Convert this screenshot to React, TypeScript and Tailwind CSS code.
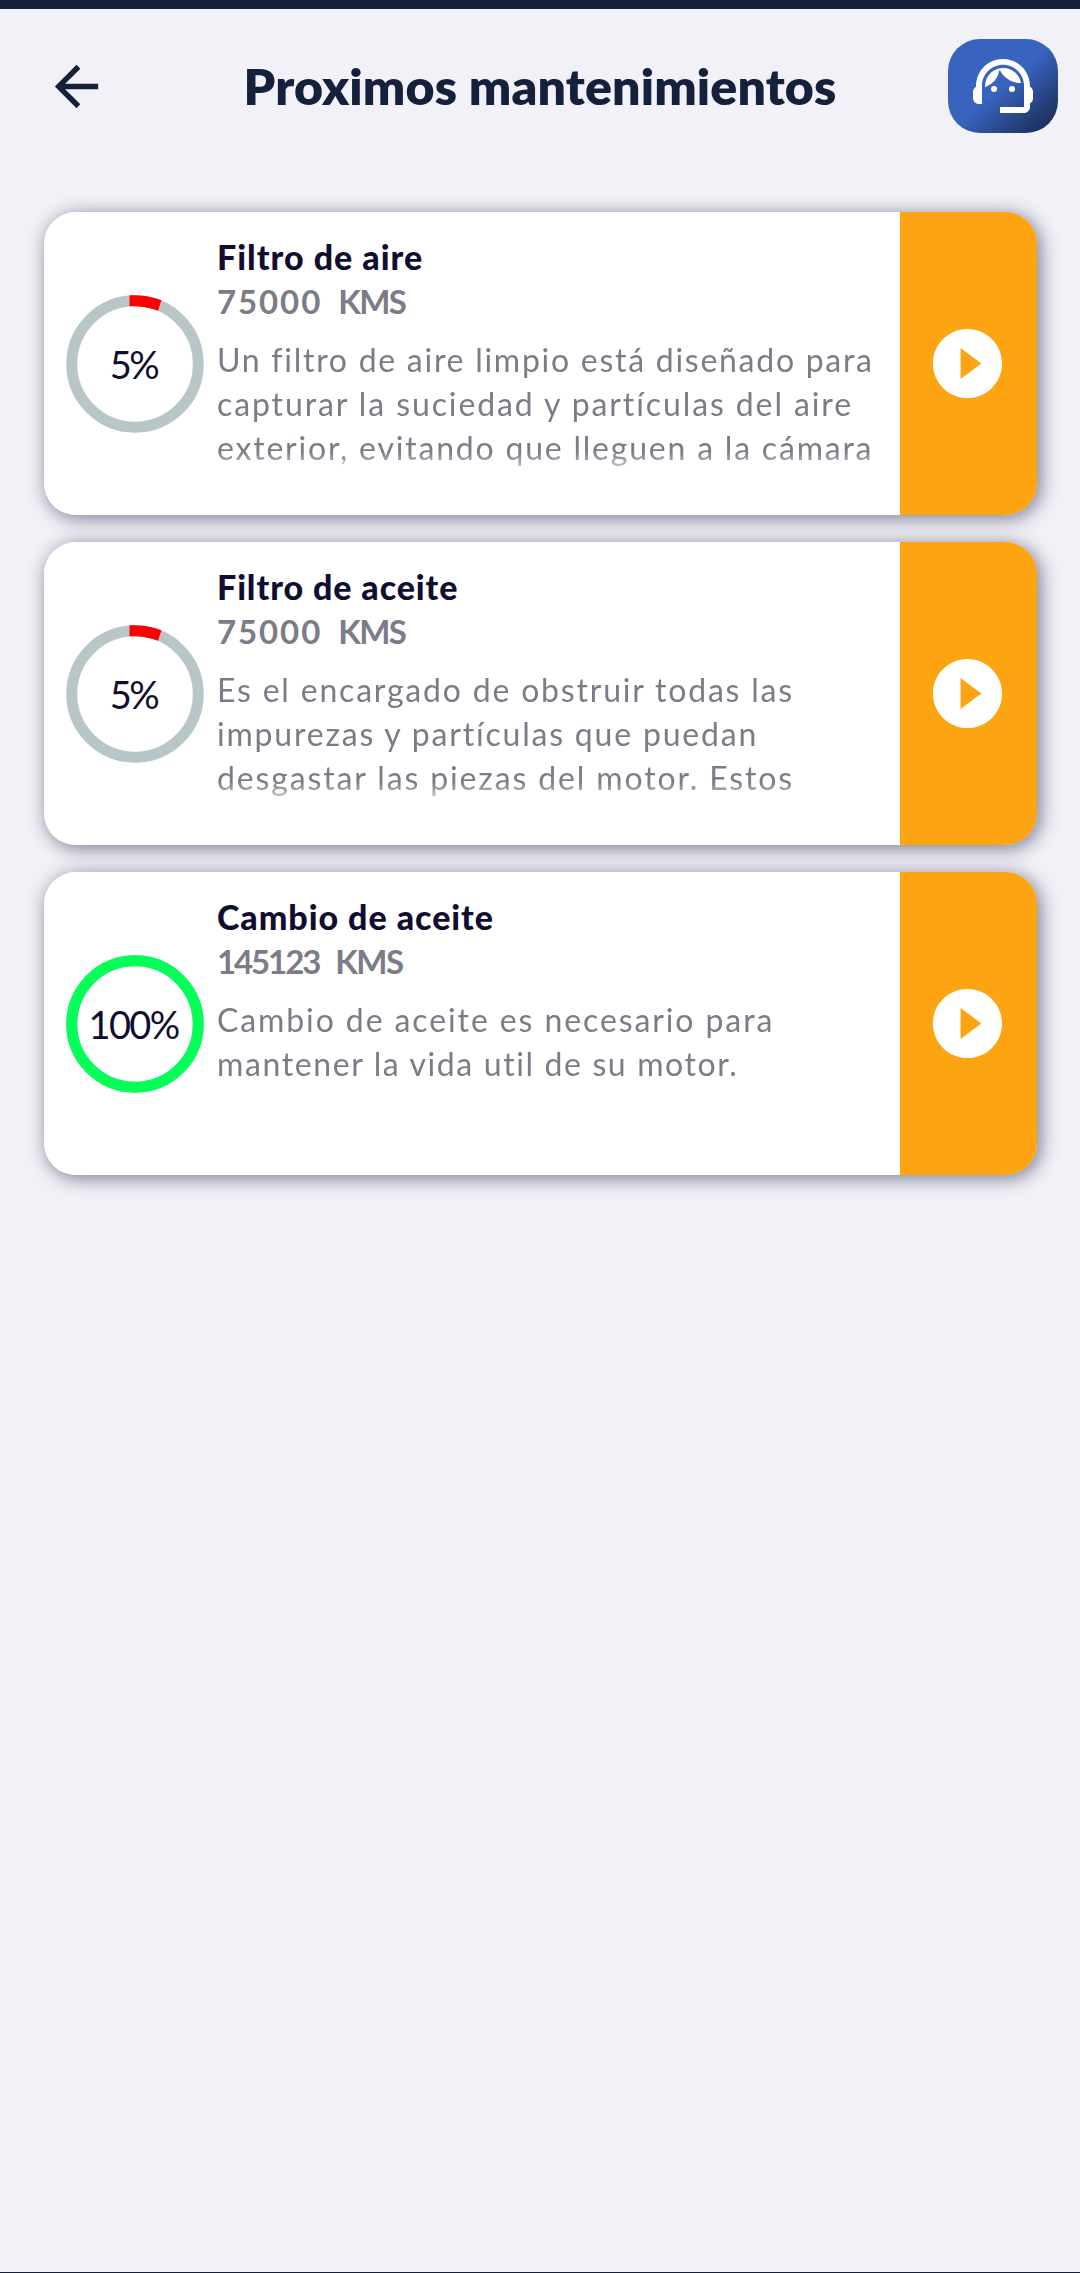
import React from 'react';
import { MdArrowBack, MdPlayCircleFilled, MdSupportAgent } from 'react-icons/md';

interface Line {
  text: string;
  tracking: string;
}

interface Maintenance {
  title: Line;
  kms: Line;
  percent: number;
  percentTracking: string;
  description: Line[];
}

const items: Maintenance[] = [
  {
    title: { text: 'Filtro de aire', tracking: 'tracking-[1px]' },
    kms: { text: '75000', tracking: 'tracking-[1.9px]' },
    percent: 5,
    percentTracking: 'tracking-[-2.5px]',
    description: [
      { text: 'Un filtro de aire limpio está diseñado para', tracking: 'tracking-[1.73px]' },
      { text: 'capturar la suciedad y partículas del aire', tracking: 'tracking-[1.9px]' },
      { text: 'exterior, evitando que lleguen a la cámara', tracking: 'tracking-[1.79px]' },
    ],
  },
  {
    title: { text: 'Filtro de aceite', tracking: 'tracking-[0.9px]' },
    kms: { text: '75000', tracking: 'tracking-[1.9px]' },
    percent: 5,
    percentTracking: 'tracking-[-2.5px]',
    description: [
      { text: 'Es el encargado de obstruir todas las', tracking: 'tracking-[1.8px]' },
      { text: 'impurezas y partículas que puedan', tracking: 'tracking-[1.8px]' },
      { text: 'desgastar las piezas del motor. Estos', tracking: 'tracking-[1.87px]' },
    ],
  },
  {
    title: { text: 'Cambio de aceite', tracking: 'tracking-[0.95px]' },
    kms: { text: '145123', tracking: 'tracking-[-2.1px]' },
    percent: 100,
    percentTracking: 'tracking-[-1.7px]',
    description: [
      { text: 'Cambio de aceite es necesario para', tracking: 'tracking-[1.9px]' },
      { text: 'mantener la vida util de su motor.', tracking: 'tracking-[1.62px]' },
    ],
  },
];

const RADIUS = 63.25;
const LENGTH = 2 * Math.PI * RADIUS;

const ProgressRing: React.FC<{ percent: number; tracking: string }> = ({ percent, tracking }) => (
  <div className="grid w-[138px] h-[138px] shrink-0 place-items-center">
    <svg viewBox="0 0 138 138" className="col-start-1 row-start-1 w-full h-full -rotate-90">
      <circle cx="69" cy="69" r={RADIUS} fill="none" stroke="#b8c6c8" strokeWidth="11" />
      <circle
        cx="69"
        cy="69"
        r={RADIUS}
        fill="none"
        stroke={percent < 100 ? '#ff0000' : '#04ff58'}
        strokeWidth="11"
        strokeLinecap={percent < 100 ? 'square' : 'butt'}
        strokeDasharray={`${(LENGTH * percent) / 100} ${LENGTH}`}
      />
    </svg>
    <span className={`col-start-1 row-start-1 pr-[3px] text-[38px] leading-none text-[#110d30] ${tracking}`}>{percent}%</span>
  </div>
);

const MaintenanceCard: React.FC<{ item: Maintenance }> = ({ item }) => (
  <div className="flex h-[303px] rounded-[32px] shadow-[3px_3px_18px_1px_rgba(30,35,70,0.54)]">
    <div className="flex flex-1 items-center rounded-l-[32px] bg-white pl-[22px]">
      <ProgressRing percent={item.percent} tracking={item.percentTracking} />
      <div className="h-full pl-[13px] pt-[23px] whitespace-pre">
        <h2 className={`h-[44px] text-[34px] leading-[44px] font-black text-[#110d30] ${item.title.tracking}`}>
          {item.title.text}
        </h2>
        <p className="h-[44px] text-[33px] leading-[44px] font-bold text-[#7b7c87]">
          <span className={item.kms.tracking}>{item.kms.text}</span>
          {'  '}
          <span className="tracking-[-1.6px]">KMS</span>
        </p>
        <div className="mt-[15px] h-[142px] overflow-hidden text-[32px] leading-[44px] text-[#7b7c87] mask-[linear-gradient(to_bottom,black_114px,transparent_142px)]">
          {item.description.map((line) => (
            <p key={line.text} className={line.tracking}>{line.text}</p>
          ))}
        </div>
      </div>
    </div>
    <button className="flex w-[137px] items-center justify-center rounded-r-[32px] bg-[#fca412] pr-[2px]">
      <MdPlayCircleFilled className="w-[83px] h-[83px] text-white" />
    </button>
  </div>
);

const App: React.FC = () => {
  return (
    <div className="flex h-[2273px] w-[1080px] flex-col border-t-[9px] border-b border-t-[#15203c] border-b-[#15203c] bg-[#f2f1f7] font-[Lato,sans-serif]">
      <header className="flex h-[154px] items-center pl-[44px] pr-[22px]">
        <MdArrowBack className="w-[65px] h-[65px] text-[#15203c]" />
        <h1 className="flex-1 pl-[23px] text-center text-[50px] leading-none font-extrabold tracking-[0.15px] text-[#15203c]">
          Proximos mantenimientos
        </h1>
        <button className="flex h-[94px] w-[110px] items-center justify-center rounded-[32px] bg-linear-to-br from-[#3864c0] from-50% to-[#18264a]">
          <MdSupportAgent className="w-[72px] h-[72px] text-white" />
        </button>
      </header>
      <main className="mt-[49px] ml-[44px] flex w-[993px] flex-col gap-[27px]">
        {items.map((item, i) => (
          <MaintenanceCard key={i} item={item} />
        ))}
      </main>
    </div>
  );
};

export default App;
